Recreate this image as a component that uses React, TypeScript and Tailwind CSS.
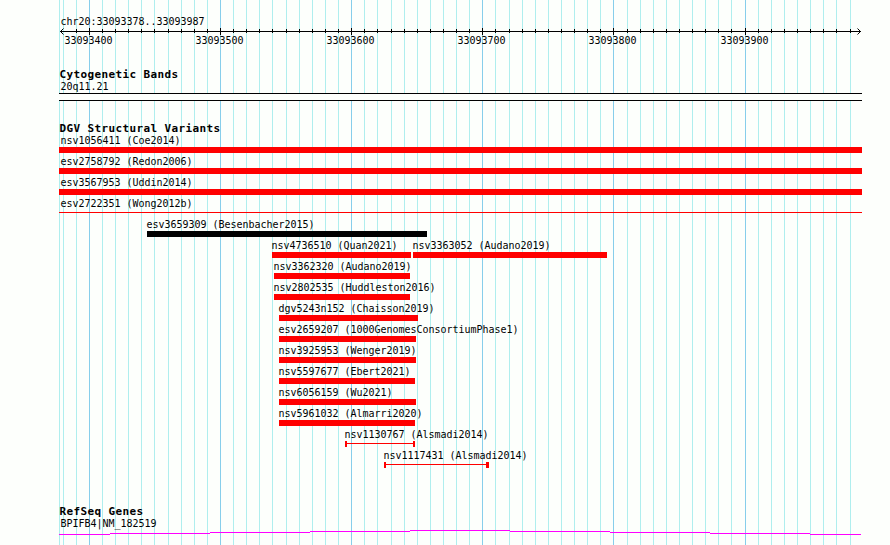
import type { ReactNode } from "react";

const MAJOR = [
  { x: 89, label: "33093400" },
  { x: 220, label: "33093500" },
  { x: 351, label: "33093600" },
  { x: 482, label: "33093700" },
  { x: 613, label: "33093800" },
  { x: 745, label: "33093900" },
];

const MINOR = [
  63, 76, 102, 115, 128, 141, 154, 168, 181, 194, 207, 233, 246, 259, 272, 286, 299, 312, 325, 338,
  364, 377, 391, 404, 417, 430, 443, 456, 469, 495, 509, 522, 535, 548, 561, 574, 587, 600, 627,
  640, 653, 666, 679, 692, 705, 718, 731, 758, 771, 784, 797, 810, 823, 836, 850,
];

type Variant = {
  name: string;
  start: number;
  end: number;
  kind?: "gain" | "line" | "range";
  cap?: number;
};

// one entry per row, a row may hold several variants
const ROWS: Variant[][] = [
  [{ name: "nsv1056411 (Coe2014)", start: 59, end: 862 }],
  [{ name: "esv2758792 (Redon2006)", start: 59, end: 862 }],
  [{ name: "esv3567953 (Uddin2014)", start: 59, end: 862 }],
  [{ name: "esv2722351 (Wong2012b)", start: 59, end: 862, kind: "line" }],
  [{ name: "esv3659309 (Besenbacher2015)", start: 147, end: 427, kind: "gain" }],
  [
    { name: "nsv4736510 (Quan2021)", start: 272, end: 411 },
    { name: "nsv3363052 (Audano2019)", start: 413, end: 607 },
  ],
  [{ name: "nsv3362320 (Audano2019)", start: 274, end: 410 }],
  [{ name: "nsv2802535 (Huddleston2016)", start: 274, end: 410 }],
  [{ name: "dgv5243n152 (Chaisson2019)", start: 279, end: 418 }],
  [{ name: "esv2659207 (1000GenomesConsortiumPhase1)", start: 279, end: 416 }],
  [{ name: "nsv3925953 (Wenger2019)", start: 279, end: 416 }],
  [{ name: "nsv5597677 (Ebert2021)", start: 279, end: 415 }],
  [{ name: "nsv6056159 (Wu2021)", start: 279, end: 416 }],
  [{ name: "nsv5961032 (Almarri2020)", start: 279, end: 415 }],
  [{ name: "nsv1130767 (Alsmadi2014)", start: 345, end: 415, kind: "range", cap: 2 }],
  [{ name: "nsv1117431 (Alsmadi2014)", start: 384, end: 489, kind: "range", cap: 3 }],
];

function Label({ children }: { children: ReactNode }) {
  return (
    <div className="h-3 origin-[0_9px] translate-x-[0.5px] scale-y-[1.12] whitespace-pre text-[10px] leading-3 tracking-[-0.02px]">
      {children}
    </div>
  );
}

function Title({ children }: { children: ReactNode }) {
  return (
    <h2 className="h-3 translate-x-[0.4px] whitespace-pre pl-[59px] text-[11px] font-bold leading-3 tracking-[0.38px]">
      {children}
    </h2>
  );
}

function Grid() {
  return (
    <svg className="absolute inset-0" width="890" height="545" shapeRendering="crispEdges">
      {[59, ...MINOR].map((x) => (
        <rect key={x} x={x} y="0" width="1" height="545" fill="#afeeee" />
      ))}
      {MAJOR.map(({ x }) => (
        <rect key={x} x={x} y="0" width="1" height="545" fill="#87ceeb" />
      ))}
    </svg>
  );
}

function Ruler() {
  return (
    <svg className="block" width="890" height="20">
      <g shapeRendering="crispEdges">
        <rect x="60" y="3" width="801" height="1" />
        {MINOR.slice(1).map((x) => (
          <rect key={x} x={x} y="1" width="1" height="4" />
        ))}
        {MAJOR.map(({ x }) => (
          <rect key={x} x={x} y="0" width="1" height="7" />
        ))}
      </g>
      <path d="M63.5 .5 60.5 3.5 63.5 6.5M857.5 .5 860.5 3.5 857.5 6.5" fill="none" stroke="#000" />
      {MAJOR.map(({ x, label }) => (
        <text
          key={x}
          fontSize="10"
          letterSpacing="-0.02"
          transform={`translate(${x - 24.5} 16) scale(1 1.12)`}
        >
          {label}
        </text>
      ))}
    </svg>
  );
}

function Glyph({ variant }: { variant: Variant }) {
  const { kind, cap } = variant;
  if (kind === "line") return <div className="mt-0.5 h-px bg-[#ff0000]" />;
  if (kind === "range") {
    return (
      <div className="flex h-1.5">
        <div className="w-0.5 bg-[#ff0000]" />
        <div className="mt-0.5 h-px flex-1 bg-[#ff0000]" />
        <div className="bg-[#ff0000]" style={{ width: cap }} />
      </div>
    );
  }
  return <div className={`h-1.5 ${kind === "gain" ? "bg-black" : "bg-[#ff0000]"}`} />;
}

function VariantRow({ variants }: { variants: Variant[] }) {
  return (
    <div className="flex h-[21px]">
      {variants.map((v, i) => (
        <div
          key={v.name}
          className="shrink-0"
          style={{ width: v.end - v.start, marginLeft: v.start - (i ? variants[i - 1].end : 0) }}
        >
          <div className={v.start === 59 ? "ml-px" : "-ml-px"}>
            <Label>{v.name}</Label>
          </div>
          <Glyph variant={v} />
        </div>
      ))}
    </div>
  );
}

export default function App() {
  return (
    <main className="relative h-[545px] w-[890px] overflow-hidden bg-[#fdfffc] font-['DejaVu_Sans_Mono',monospace] text-black">
      <Grid />
      <div className="relative pt-4">
        <div className="pl-[60px]">
          <Label>chr20:33093378..33093987</Label>
        </div>
        <Ruler />

        <section className="mt-[21px]">
          <Title>Cytogenetic Bands</Title>
          <div className="pl-[60px]">
            <Label>20q11.21</Label>
          </div>
          <div className="ml-[59px] h-2 w-[803px] border-y border-black bg-[#fdfffc]" />
        </section>

        <section className="mt-[22px]">
          <Title>DGV Structural Variants</Title>
          {ROWS.map((variants) => (
            <VariantRow key={variants[0].name} variants={variants} />
          ))}
        </section>

        <section className="mt-[35px]">
          <Title>RefSeq Genes</Title>
          <div className="pl-[60px]">
            <Label>BPIFB4|NM_182519</Label>
          </div>
          <svg className="block" width="890" height="6" shapeRendering="crispEdges">
            <path
              d="M59 4.5H110M110 3.5H210M210 2.5H310M310 1.5H410M410 .5H510M510 1.5H610M610 2.5H710M710 3.5H810M810 4.5H861"
              fill="none"
              stroke="#ff00ff"
            />
          </svg>
        </section>
      </div>
    </main>
  );
}
